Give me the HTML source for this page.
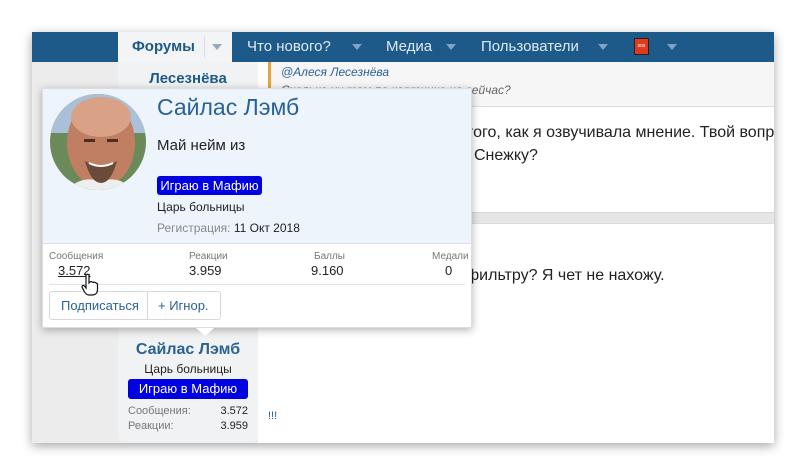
<!DOCTYPE html>
<html><head><meta charset="utf-8"><style>
*{margin:0;padding:0;box-sizing:border-box}
body{width:806px;height:476px;background:#fff;position:relative;overflow:hidden;font-family:"Liberation Sans","DejaVu Sans",sans-serif;}
.win{position:absolute;left:32px;top:32px;width:742px;height:411px;background:#ececec;box-shadow:0 3px 10px rgba(0,0,0,.35);overflow:hidden}
.nav{position:absolute;left:0;top:0;width:742px;height:30px;background:#1d5a8a;color:#dfe9f3;font-size:15px}
.nav span{position:absolute;top:6px}
.tri{position:absolute;top:12px;width:0;height:0;border-left:5px solid transparent;border-right:5px solid transparent;border-top:6px solid #7fa3c4}
.act{position:absolute;left:86px;top:0;width:114px;height:30px;background:#f3f4f5}
.side{position:absolute;left:86px;top:30px;width:140px;height:380px;background:#f1f2f3;border-radius:0 0 6px 6px}
.main{position:absolute;left:226px;top:30px;width:516px;height:381px;background:#fff;overflow:hidden}
.q{position:absolute;left:10px;top:0;width:506px;height:44px;background:#f6f6f6;border-left:3px solid #e8a33a}
.p{position:absolute;font-size:16px;color:#222;white-space:nowrap}
.pop{position:absolute;left:42px;top:88px;width:430px;height:240px;background:#fff;box-shadow:0 2px 8px rgba(0,0,0,.3);border:1px solid #ddd}
.ptop{position:absolute;left:0;top:0;width:428px;height:154px;background:#edf4fc}
.badge{background:#0000e0;color:#fff;border-radius:3px;font-size:13px;text-align:center}
.st{position:absolute;font-size:10px;color:#777}
.sv{position:absolute;font-size:13px;color:#222}
</style></head><body>
<div class="win">
 <div class="nav">
  <div class="act"></div>
  <span style="left:100px;color:#1d5a8a;font-weight:bold">Форумы</span>
  <div style="position:absolute;left:172px;top:4px;width:1px;height:22px;background:#dde"></div>
  <div class="tri" style="left:180px;border-top-color:#9ab"></div>
  <span style="left:215px">Что нового?</span><div class="tri" style="left:320px"></div>
  <span style="left:354px">Медиа</span><div class="tri" style="left:414px"></div>
  <span style="left:449px">Пользователи</span><div class="tri" style="left:566px"></div>
  <div style="position:absolute;left:602px;top:6px;width:15px;height:17px;background:#e03a1e;border:1px solid #222;font-size:5px;color:#fff;text-align:center;line-height:15px">sos</div>
  <div class="tri" style="left:635px"></div>
 </div>
 <div class="side">
  <div style="position:absolute;top:8px;width:140px;text-align:center;color:#1d5a8a;font-weight:bold;font-size:15px">Лесезнёва</div>
  <div style="position:absolute;top:279px;width:140px;text-align:center;color:#2a6296;font-weight:bold;font-size:16px">Сайлас Лэмб</div>
  <div style="position:absolute;top:300px;width:140px;text-align:center;color:#222;font-size:12px">Царь больницы</div>
  <div class="badge" style="position:absolute;left:10px;top:317px;width:120px;height:20px;line-height:20px">Играю в Мафию</div>
  <div style="position:absolute;left:10px;top:342px;font-size:11px;color:#777;line-height:15px">Сообщения:<br>Реакции:</div>
  <div style="position:absolute;right:10px;top:342px;font-size:11px;color:#222;line-height:15px;text-align:right">3.572<br>3.959</div>
 </div>
 <div class="main">
  <div class="q"><div style="position:absolute;left:10px;top:3px;font-size:12px;font-style:italic;color:#2a6296">@Алеся Лесезнёва</div>
   <div style="position:absolute;left:10px;top:21px;font-size:12px;font-style:italic;color:#666">Сколько их там по картинке на сейчас?</div></div>
  <div style="position:absolute;left:0;top:44px;width:516px;height:1px;background:#ddd"></div>
  <div class="p" style="left:208px;top:62px">того, как я озвучивала мнение. Твой вопрос</div>
  <div class="p" style="left:216px;top:85px">Снежку?</div>
  <div style="position:absolute;left:0;top:150px;width:516px;height:12px;background:#e6e6e6;border-top:1px solid #d6d6d6;border-bottom:1px solid #ddd"></div>
  <div class="p" style="left:208px;top:205px">фильтру? Я чет не нахожу.</div>
  <div style="position:absolute;left:10px;top:348px;font-size:11px;color:#2a6296">!!!</div>
 </div>
</div>
<div class="pop">
 <div class="ptop"></div>
 <svg style="position:absolute;left:6px;top:4px" width="98" height="98" viewBox="0 0 98 98">
  <defs><clipPath id="c"><circle cx="49" cy="49" r="48"/></clipPath></defs>
  <g clip-path="url(#c)">
   <rect width="98" height="98" fill="#6a8a5a"/>
   <rect x="0" y="0" width="98" height="40" fill="#a9c0d8"/>
   <ellipse cx="52" cy="50" rx="34" ry="44" fill="#c07e62"/>
   <ellipse cx="52" cy="24" rx="30" ry="20" fill="#d9a186"/>
   <path d="M18 98 Q30 82 52 88 Q72 82 84 98Z" fill="#eee"/>
   <path d="M36 68 Q52 78 68 68 Q62 90 52 90 Q42 90 36 68Z" fill="#6b4a3a"/>
   <path d="M40 70 Q52 76 64 70" stroke="#fff" stroke-width="2" fill="none"/>
   <rect x="35" y="46" width="11" height="3" fill="#4a2e22"/><rect x="58" y="46" width="11" height="3" fill="#4a2e22"/>
  </g>
 </svg>
 <div style="position:absolute;left:114px;top:5px;font-size:23px;color:#2a6296">Сайлас Лэмб</div>
 <div style="position:absolute;left:114px;top:48px;font-size:15px;color:#222">Май нейм из</div>
 <div class="badge" style="position:absolute;left:114px;top:87px;width:105px;height:19px;line-height:19px">Играю в Мафию</div>
 <div style="position:absolute;left:114px;top:111px;font-size:12px;color:#222">Царь больницы</div>
 <div style="position:absolute;left:114px;top:132px;font-size:12px;color:#888">Регистрация: <span style="color:#222">11 Окт 2018</span></div>
 <div style="position:absolute;left:0;top:154px;width:428px;height:1px;background:#dde"></div>
 <div class="st" style="left:6px;top:162px">Сообщения</div><div class="sv" style="left:15px;top:174px;text-decoration:underline">3.572</div>
 <div class="st" style="left:146px;top:162px">Реакции</div><div class="sv" style="left:146px;top:174px">3.959</div>
 <div class="st" style="left:271px;top:162px">Баллы</div><div class="sv" style="left:268px;top:174px">9.160</div>
 <div class="st" style="left:389px;top:162px">Медали</div><div class="sv" style="left:402px;top:174px">0</div>
 <div style="position:absolute;left:6px;top:195px;width:416px;height:1px;background:#e2e2e2"></div>
 <div style="position:absolute;left:6px;top:202px;width:172px;height:29px;border:1px solid #d8d8d8;border-radius:3px;font-size:13px;color:#2a6296">
  <span style="position:absolute;left:11px;top:6px">Подписаться</span>
  <div style="position:absolute;left:97px;top:0;width:1px;height:27px;background:#d8d8d8"></div>
  <span style="position:absolute;left:108px;top:6px">+ Игнор.</span>
 </div>
 <svg style="position:absolute;left:38px;top:184px" width="18" height="24" viewBox="0 0 18 24"><path d="M5 2 Q6.5 0.5 8 2 V10 L9 9 Q10.5 8 12 9.5 Q13.5 8.5 15 10 Q16.5 10 16.5 12 V17 Q16 22 11 22 H8 Q5 22 3 18 L1 14 Q1 12 3 12.5 L5 15Z" fill="#fff" stroke="#111" stroke-width="1.2"/></svg>
</div>
<div style="position:absolute;left:196px;top:328px;width:0;height:0;border-left:9px solid transparent;border-right:9px solid transparent;border-top:8px solid #fff"></div>
</body></html>
